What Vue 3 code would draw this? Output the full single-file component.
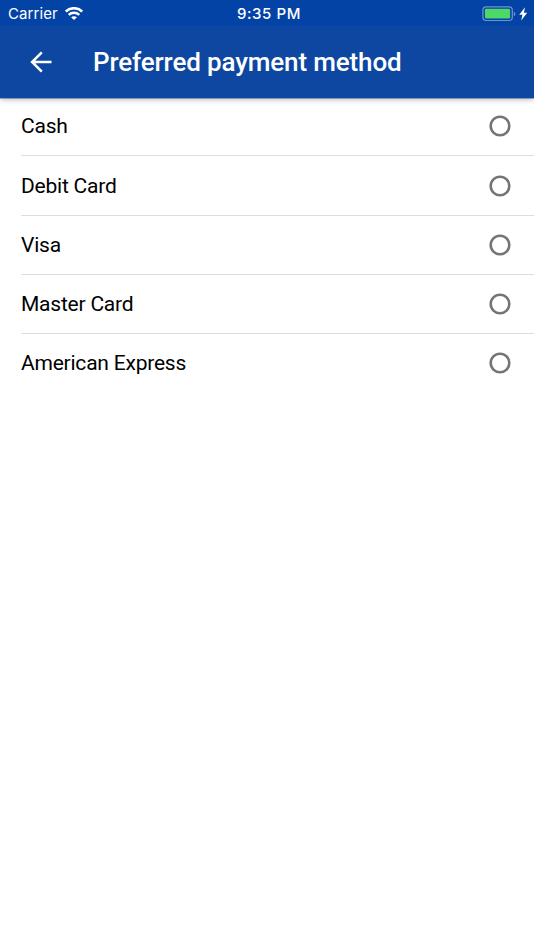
<template>
  <div class="screen">
    <div class="status-bar">
      <div class="status-left">
        <span class="carrier">Carrier</span>
        <svg class="wifi" width="18" height="13" viewBox="0 0 18 13" fill="none" stroke="#fff">
          <path d="M0.7 4.6C5.4 0.1 12.6 0.1 17.3 4.6" stroke-width="2.6" />
          <path d="M3.7 7.8C6.7 5 11.3 5 14.3 7.8" stroke-width="2.4" />
          <path d="M9 13L6.1 10.3C7.7 8.9 10.3 8.9 11.9 10.3Z" fill="#fff" stroke="none" />
        </svg>
      </div>
      <span class="time">9:35 PM</span>
      <div class="status-right">
        <svg width="46" height="16" viewBox="0 0 46 16">
          <rect x="0.9" y="0.9" width="29.4" height="13.6" rx="3.2" fill="none" stroke="#6f95cf" stroke-width="1.2" />
          <rect x="2.9" y="2.8" width="25.2" height="9.8" rx="1.4" fill="#4cd964" />
          <path d="M31.8 5.5C33.8 6.3 33.8 9.5 31.8 10.3Z" fill="#6f95cf" />
          <path d="M43 1.2L37.2 8.8H40.4L39.2 14.4L45.2 6.8H41.9Z" fill="#fff" />
        </svg>
      </div>
    </div>

    <div class="toolbar">
      <button class="back-btn">
        <svg width="22" height="22" viewBox="0 0 22 22" fill="none" stroke="#fff" stroke-width="2.5">
          <path d="M21.5 11H2.5M11.8 1.3L2.1 11L11.8 20.7" />
        </svg>
      </button>
      <h1 class="title">Preferred payment method</h1>
    </div>

    <ul class="method-list">
      <li v-for="method in methods" :key="method" class="method" @click="selected = method">
        <span class="method-name">{{ method }}</span>
        <svg class="radio" width="22" height="22" viewBox="0 0 22 22">
          <circle cx="11" cy="11" r="9.3" fill="none" stroke="#757575" stroke-width="2.6" />
          <circle v-if="selected === method" cx="11" cy="11" r="5" fill="#0d47a1" />
        </svg>
      </li>
    </ul>
  </div>
</template>

<script setup>
import { ref } from 'vue'

const methods = ['Cash', 'Debit Card', 'Visa', 'Master Card', 'American Express']
const selected = ref(null)
</script>

<style scoped>
.screen {
  width: 100%;
  height: 950px;
  background: #fff;
  font-family: Roboto, sans-serif;
  overflow: hidden;
}

.status-bar {
  position: relative;
  z-index: 1;
  display: grid;
  grid-template-columns: 1fr auto 1fr;
  align-items: center;
  height: 26px;
  padding: 0 6px 0 8px;
  background: #0443a6;
  color: #fff;
  font-family: Inter, sans-serif;
  box-sizing: border-box;
}

.status-left {
  display: flex;
  align-items: center;
  gap: 7px;
}

.carrier {
  font-size: 15px;
  line-height: 26px;
  padding-top: 1px;
  letter-spacing: 0.1px;
}

.time {
  font-size: 15px;
  font-weight: 500;
  line-height: 26px;
  padding: 1px 0 0 2px;
  letter-spacing: 0.6px;
}

.status-right {
  display: flex;
  justify-content: flex-end;
}

.toolbar {
  position: relative;
  display: flex;
  align-items: center;
  height: 72px;
  padding-left: 30px;
  background: #0d47a1;
  box-shadow: 0 0.4px 0 #0d47a1, 0 1px 6px rgba(0, 0, 0, 0.32);
  box-sizing: border-box;
}

.back-btn {
  display: flex;
  width: 22px;
  padding: 0;
  background: none;
  border: none;
}

.title {
  margin: 0 0 0 41px;
  color: #fff;
  font-size: 26px;
  font-weight: 500;
  line-height: 36px;
  letter-spacing: -0.14px;
  white-space: nowrap;
}

.method-list {
  margin: 0;
  padding: 0 0 0 21px;
  list-style: none;
}

.method {
  display: flex;
  align-items: center;
  justify-content: space-between;
  height: 59.3px;
  padding-right: 23px;
  border-top: 1px solid #dedede;
  box-sizing: border-box;
}

.method:first-child {
  height: 57.4px;
  padding-bottom: 0.8px;
  border-top: none;
}

.method-name {
  color: #000;
  font-size: 21px;
  line-height: 30px;
  letter-spacing: -0.22px;
}
</style>
